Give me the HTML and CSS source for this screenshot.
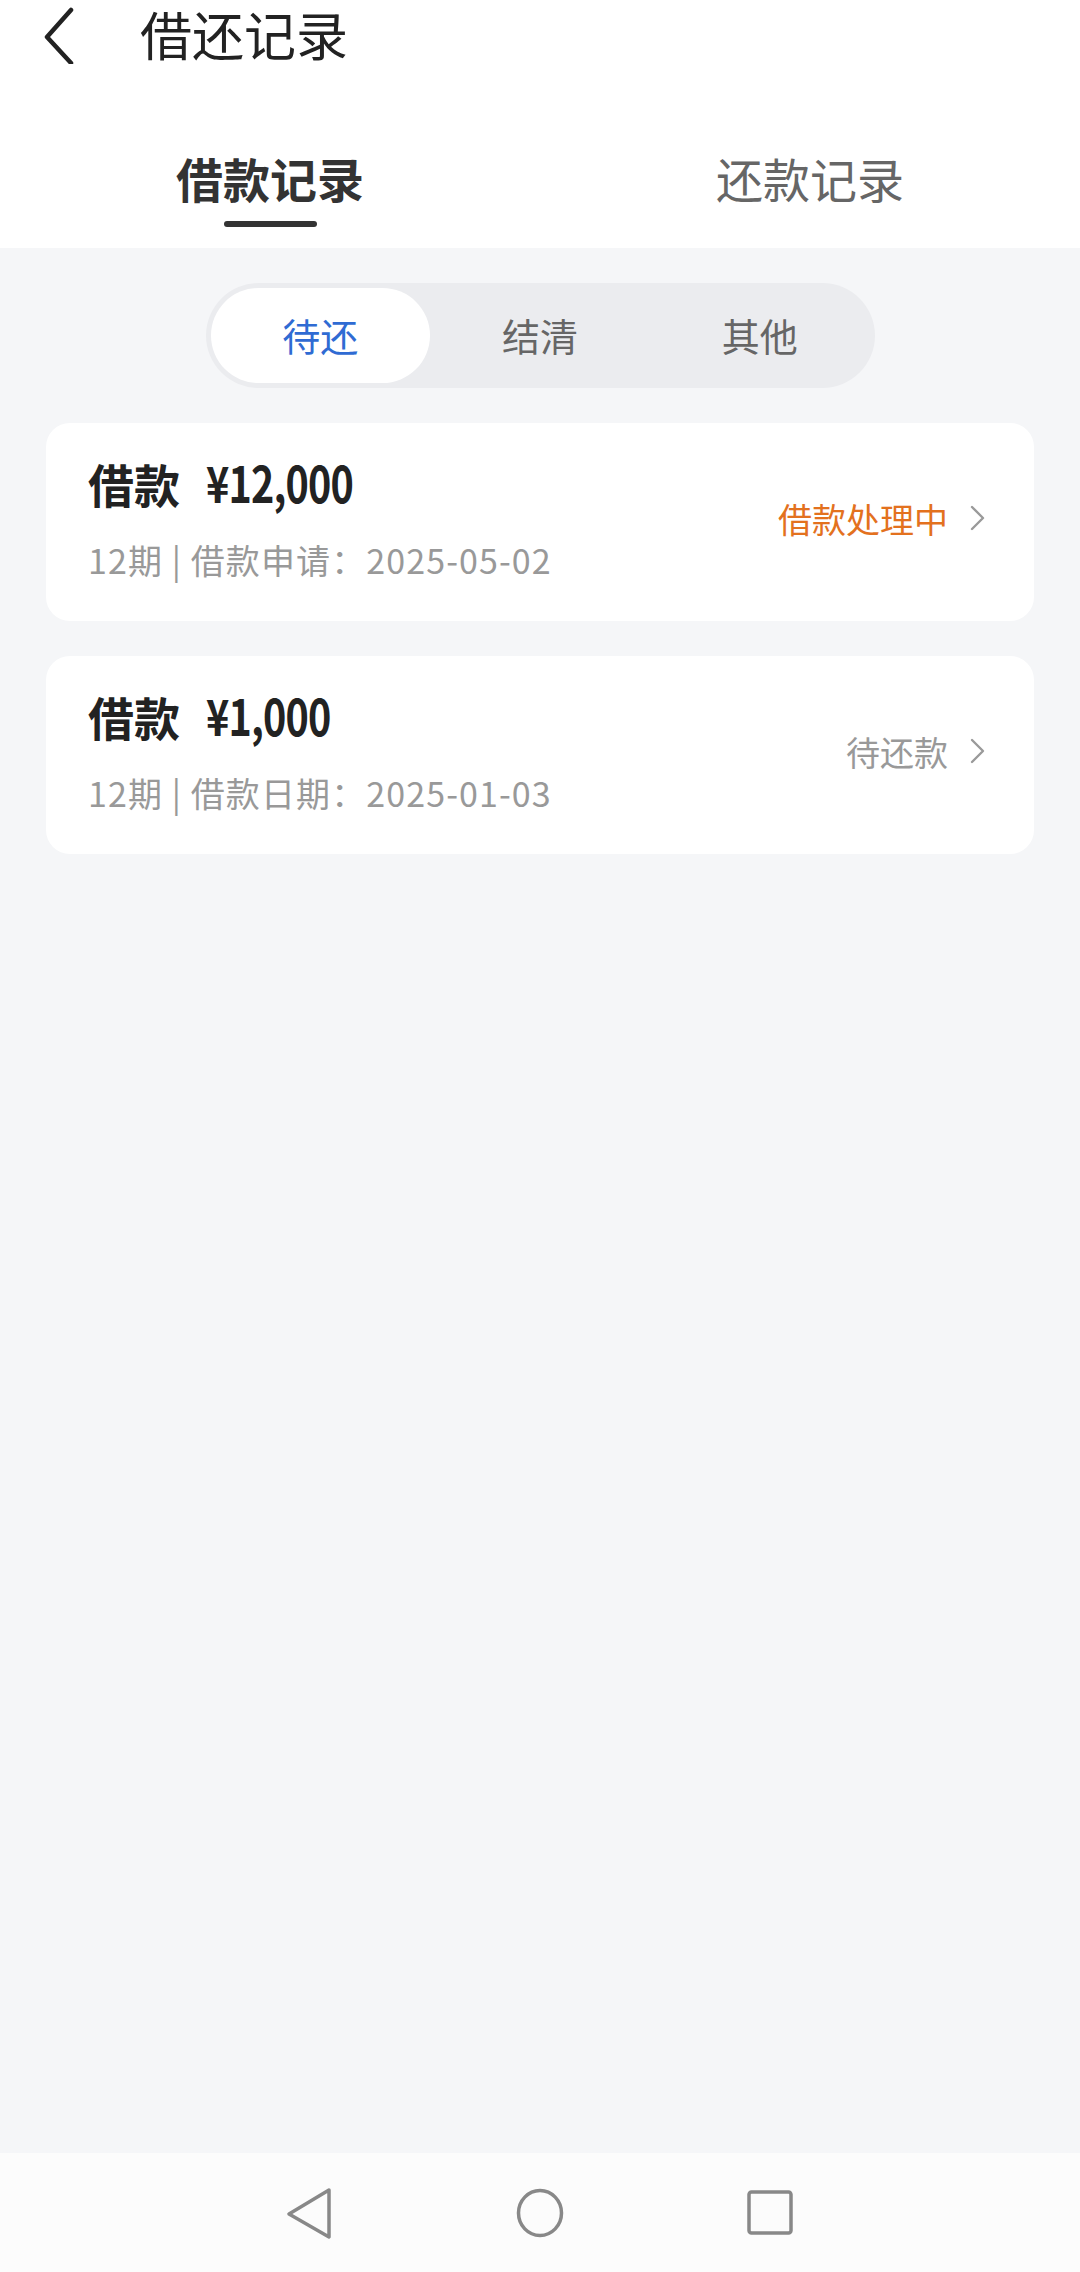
FILE: index.html
```html
<!DOCTYPE html>
<html lang="zh-CN">
<head>
    <meta charset="UTF-8">
    <meta name="viewport" content="width=device-width, initial-scale=1.0">
    <title>借还记录</title>
    <link rel="stylesheet" href="styles.css">
</head>
<body>

<div class="page">
    <div class="top">
        <div class="header">
            <svg class="back" width="40" height="60" viewBox="0 0 40 60">
                <path d="M31 6 L7 33 L31 59" fill="none" stroke="#222" stroke-width="4.5" stroke-linecap="round" stroke-linejoin="round"/>
            </svg>
            <span class="title">借还记录</span>
        </div>

        <div class="tabs">
            <div class="tab active">
                <span>借款记录</span>
                <i class="underline"></i>
            </div>
            <div class="tab">
                <span>还款记录</span>
                <i class="underline"></i>
            </div>
        </div>
    </div>

    <div class="main">
        <div class="segment">
            <div class="seg on">待还</div>
            <div class="seg">结清</div>
            <div class="seg">其他</div>
        </div>

        <div class="card">
            <div class="info">
                <div class="amount">借款<span class="num">¥12,000</span></div>
                <div class="sub">12期 | 借款申请：2025-05-02</div>
            </div>
            <div class="status orange">
                借款处理中
                <svg class="arrow" width="20" height="32" viewBox="0 0 20 32">
                    <path d="M4 5 L15 16 L4 27" fill="none" stroke="#9a9a9a" stroke-width="2.4" stroke-linecap="round" stroke-linejoin="round"/>
                </svg>
            </div>
        </div>

        <div class="card">
            <div class="info">
                <div class="amount">借款<span class="num">¥1,000</span></div>
                <div class="sub">12期 | 借款日期：2025-01-03</div>
            </div>
            <div class="status">
                待还款
                <svg class="arrow" width="20" height="32" viewBox="0 0 20 32">
                    <path d="M4 5 L15 16 L4 27" fill="none" stroke="#9a9a9a" stroke-width="2.4" stroke-linecap="round" stroke-linejoin="round"/>
                </svg>
            </div>
        </div>
    </div>

    <div class="navbar">
        <div class="nav-btn">
            <svg width="60" height="60" viewBox="0 0 60 60">
                <path d="M49 7 L9 31 L49 54 Z" fill="none" stroke="#888" stroke-width="3.5" stroke-linejoin="round"/>
            </svg>
        </div>
        <div class="nav-btn">
            <svg width="60" height="60" viewBox="0 0 60 60">
                <ellipse cx="30" cy="30" rx="21.5" ry="22.5" fill="none" stroke="#888" stroke-width="3.5"/>
            </svg>
        </div>
        <div class="nav-btn">
            <svg width="60" height="60" viewBox="0 0 60 60">
                <rect x="9" y="9" width="42" height="41" rx="2.5" fill="none" stroke="#888" stroke-width="3.5"/>
            </svg>
        </div>
    </div>
</div>

</body>
</html>
```

FILE: styles.css
```css
body {
    margin: 0;
    font-family: "Noto Sans CJK SC", "Noto Sans", sans-serif;
    background-color: #f5f6f8;
}
.page {
    width: 1080px;
    height: 2272px;
    display: flex;
    flex-direction: column;
}
.top {
    background-color: #fff;
}
.header {
    height: 68px;
    display: flex;
    align-items: center;
    padding-left: 40px;
}
.title {
    margin-left: 60px;
    font-size: 52px;
    line-height: 68px;
    color: #222;
}
.tabs {
    display: flex;
    height: 180px;
}
.tab {
    flex: 1;
    display: flex;
    flex-direction: column;
    align-items: center;
    padding-top: 78px;
    font-size: 47px;
    line-height: 64px;
    color: #666;
}
.tab .underline {
    width: 93px;
    height: 6px;
    border-radius: 3px;
    margin-top: 11px;
}
.tab.active {
    color: #333;
    font-weight: bold;
}
.tab.active .underline {
    background-color: #333;
}
.main {
    flex: 1;
    display: flex;
    flex-direction: column;
    align-items: center;
    padding-top: 35px;
}
.segment {
    width: 669px;
    height: 105px;
    box-sizing: border-box;
    padding: 5px;
    display: flex;
    background-color: #ebecef;
    border-radius: 53px;
    margin-bottom: 35px;
}
.seg {
    flex: 1;
    display: flex;
    align-items: center;
    justify-content: center;
    padding-bottom: 3px;
    font-size: 38px;
    color: #666;
    border-radius: 48px;
}
.seg.on {
    background-color: #fff;
    color: #2f6bd3;
}
.card {
    width: 988px;
    height: 198px;
    box-sizing: border-box;
    background-color: #fff;
    border-radius: 24px;
    padding: 30px 46px 0 42px;
    margin-bottom: 35px;
    display: flex;
    justify-content: space-between;
}
.info {
    display: flex;
    flex-direction: column;
}
.amount {
    font-size: 46px;
    line-height: 56px;
    font-weight: bold;
    color: #222;
}
.num {
    display: inline-block;
    margin-left: 26px;
    font-size: 50px;
    letter-spacing: -1px;
    transform: scaleX(0.79);
    transform-origin: left center;
}
.sub {
    margin-top: 27px;
    font-size: 34px;
    line-height: 44px;
    letter-spacing: 1.1px;
    color: #999;
}
.status {
    display: flex;
    align-items: center;
    height: 198px;
    margin-top: -34px;
    font-size: 34px;
    color: #999;
}
.status.orange {
    color: #e3711e;
}
.arrow {
    margin-left: 20px;
}
.navbar {
    height: 119px;
    background-color: #fcfcfc;
    display: flex;
    justify-content: center;
    align-items: center;
    gap: 170px;
}
.nav-btn {
    width: 60px;
    height: 60px;
}
```
